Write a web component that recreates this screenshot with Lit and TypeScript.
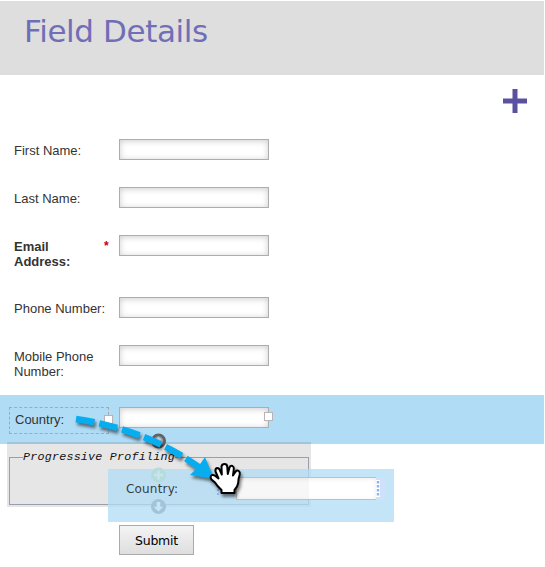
import { LitElement, html, css, svg } from "lit";
import { customElement, property } from "lit/decorators.js";
import { classMap } from "lit/directives/class-map.js";

@customElement("form-row")
class FormRow extends LitElement {
  @property() label = "";
  @property({ type: Boolean }) required = false;
  @property({ type: Boolean, reflect: true }) tall = false;
  static styles = css`
    :host { display: block; height: 48px; }
    :host([tall]) { height: 62px; }
    .row { display: grid; grid-template-columns: 91px 14px 150px; padding-left: 14px; }
    .label { padding-top: 4px; line-height: 15px; white-space: nowrap; }
    .wrap { white-space: normal; }
    .bold { font-weight: bold; width: 70px; }
    .star { color: #c00020; padding-top: 4px; line-height: 15px; margin-left: -1px; font-weight: bold; font-size: 12px; }
    .field { box-sizing: border-box; height: 21px; border: 1px solid #adadad; background: #fff; box-shadow: inset 0 1px 6px rgba(0,0,0,.2); }
  `;
  render() {
    return html`<div class="row">
      <div class=${classMap({ label: true, wrap: this.tall, bold: this.required })}>${this.label}</div>
      <div class="star">${this.required ? "*" : ""}</div>
      <div class="field"></div>
    </div>`;
  }
}

@customElement("app-root")
class AppRoot extends LitElement {
  static styles = css`
    :host { display: flow-root; position: relative; width: 545px; height: 567px; overflow: hidden; background: #fff; font: 13px "Liberation Sans", Arial, sans-serif; color: #333; }
    .header { box-sizing: border-box; width: 544px; height: 74px; margin-top: 1px; background: #dedede; padding: 12px 0 0 24px; color: #706eb6; font: 31px/36px "DejaVu Sans", Verdana, sans-serif; letter-spacing: -0.4px; white-space: nowrap; }
    .tools { height: 64px; display: flex; justify-content: flex-end; padding: 14px 18px 0 0; box-sizing: border-box; }
    .country { box-sizing: border-box; width: 544px; height: 49px; margin-top: -12px; background: #b0dcf6; display: flex; padding: 12px 0 0 9px; }
    .picked { position: relative; box-sizing: border-box; width: 100px; height: 27px; border: 1px dashed #a8a8a8; padding: 4px 0 0 5px; line-height: 15px; }
    .target { position: relative; box-sizing: border-box; margin-left: 10px; width: 150px; height: 21px; border: 1px solid #adadad; background: #fff; box-shadow: inset 0 1px 6px rgba(0,0,0,.2); }
    .grip { position: absolute; box-sizing: border-box; width: 9px; height: 9px; background: #fff; border: 1px solid #b5b5b5; }
    .picked .grip { right: -5px; top: 7px; }
    .target .grip { right: -5px; top: 4px; }
    .group { box-sizing: border-box; width: 304px; height: 65px; margin: -2px 0 0 7px; background: rgba(0,0,0,.098); padding: 15px 2px 2px; position: relative; }
    .frame { box-sizing: border-box; height: 48px; border: 1px solid #9a9eac; position: relative; }
    .legend { position: absolute; left: 13px; top: -8px; background: #e6e6e6; color: #111; font: italic 11.7px/14px "Liberation Mono", "Courier New", monospace; letter-spacing: .22px; white-space: nowrap; }
    .submit { box-sizing: border-box; width: 75px; height: 30px; margin: 18px 0 0 119px; border: 1px solid #aaa; background: linear-gradient(#f4f4f4, #dedede); color: #000; text-align: center; font: 12.5px/29px "DejaVu Sans", Verdana, sans-serif; letter-spacing: -.2px; }
    .ghost { position: absolute; left: 108px; top: 469px; width: 286px; height: 53px; background: rgba(176,220,246,.75); }
    .ghost-label { position: absolute; left: 18px; top: 12px; font: 12px/16px "DejaVu Sans", Verdana, sans-serif; color: #333d44; white-space: nowrap; letter-spacing: .18px; }
    .ghost-field { position: absolute; box-sizing: border-box; left: 128px; top: 8px; width: 140px; height: 23px; border: 1px solid #bfbfbf; border-right: 0; background: linear-gradient(90deg, #f7f7f7 72px, #fff 72px); box-shadow: inset 0 1px 4px rgba(0,0,0,.08); }
    .ghost-edge { position: absolute; left: 268px; top: 8px; width: 10px; height: 23px; background: #cfe1fa; }
    .overlay { position: absolute; left: 0; top: 0; pointer-events: none; }
  `;
  render() {
    return html`
      <div class="header">Field Details</div>
      <div class="tools"><svg width="24" height="24"><path d="M9.500 0h5v9.500H24v5h-9.500V24h-5v-9.500H0v-5h9.500z" fill="#5a52a0"/></svg></div>
      <form-row label="First Name:"></form-row>
      <form-row label="Last Name:"></form-row>
      <form-row label="Email Address:" required tall></form-row>
      <form-row label="Phone Number:"></form-row>
      <form-row label="Mobile Phone Number:" tall></form-row>
      <div class="country">
        <div class="picked">Country:<i class="grip"></i></div>
        <div class="target"><i class="grip"></i></div>
      </div>
      <div class="group"><div class="frame"><span class="legend">Progressive Profiling</span></div></div>
      <div class="submit">Submit</div>
      <div class="ghost">
        <span class="ghost-label">Country:</span>
        <div class="ghost-field"></div><div class="ghost-edge"></div>
      </div>
      <svg class="overlay" width="545" height="567" viewBox="0 0 545 567">
        <defs><filter id="sh" x="-20%" y="-20%" width="150%" height="160%" color-interpolation-filters="sRGB"><feDropShadow dx="1.500" dy="3" stdDeviation="1.800" flood-color="#000" flood-opacity=".5"/></filter></defs>
        ${svg`
        <circle cx="158.500" cy="441" r="6.200" fill="#8a979f" stroke="#606264" stroke-width="2.800"/>
        <path d="M158.500 436.500l4 4h-2.500v4h-3v-4h-2.500z" fill="#b9cbd5"/>
        <circle cx="158.500" cy="475" r="7.500" fill="#b5dcdb"/>
        <path d="M158.500 470.500v9M154 475h9" stroke="#c6e5ee" stroke-width="2.500"/>
        <circle cx="158.500" cy="506.500" r="7.500" fill="#a1c4d8"/>
        <path d="M158.500 511.500l-4.800-4.800h3v-4.700h3.600v4.700h3z" fill="#c5e5f7"/>
        <path d="M378 480v17" stroke="#fff" stroke-width="4"/>
        <path d="M378 481v15" stroke="#8db4ee" stroke-width="2.500" stroke-dasharray="2.500 1.500"/>
        <path d="M218 489v6" stroke="#8db4ee" stroke-width="2" stroke-dasharray="2 2"/>
        <g filter="url(#sh)">
          <path d="M76 419Q148 430 200 468" fill="none" stroke="#08adf0" stroke-width="6.600" stroke-dasharray="18.500 5"/>
          <path d="M205 457L214 479L190 475L198 467Z" fill="#08adf0"/>
        </g>
        <g filter="url(#sh)">
          <path d="M221.500 493V490Q217 486 215 482.500L211.500 479.500Q209.500 476.500 212 475Q214 474.500 216 476.500L218.500 478.500L215.500 471.500Q215 468.500 217.200 468Q219.200 468 220 470.500L221.800 474.500L221.500 466.500Q222 464 224.500 464Q227 464 227.200 466.500L227.800 474L229.500 467.500Q230.500 465.200 232.500 466Q234.200 467 233.800 469L233 475.500L235.500 471.800Q237 469.700 238.800 471Q240.300 472 239.700 474.500Q238.200 479 238.200 483Q237.500 487 234.500 490V493Z" fill="#fff" stroke="#000" stroke-width="2" stroke-linejoin="round"/>
        </g>`}
      </svg>`;
  }
}
